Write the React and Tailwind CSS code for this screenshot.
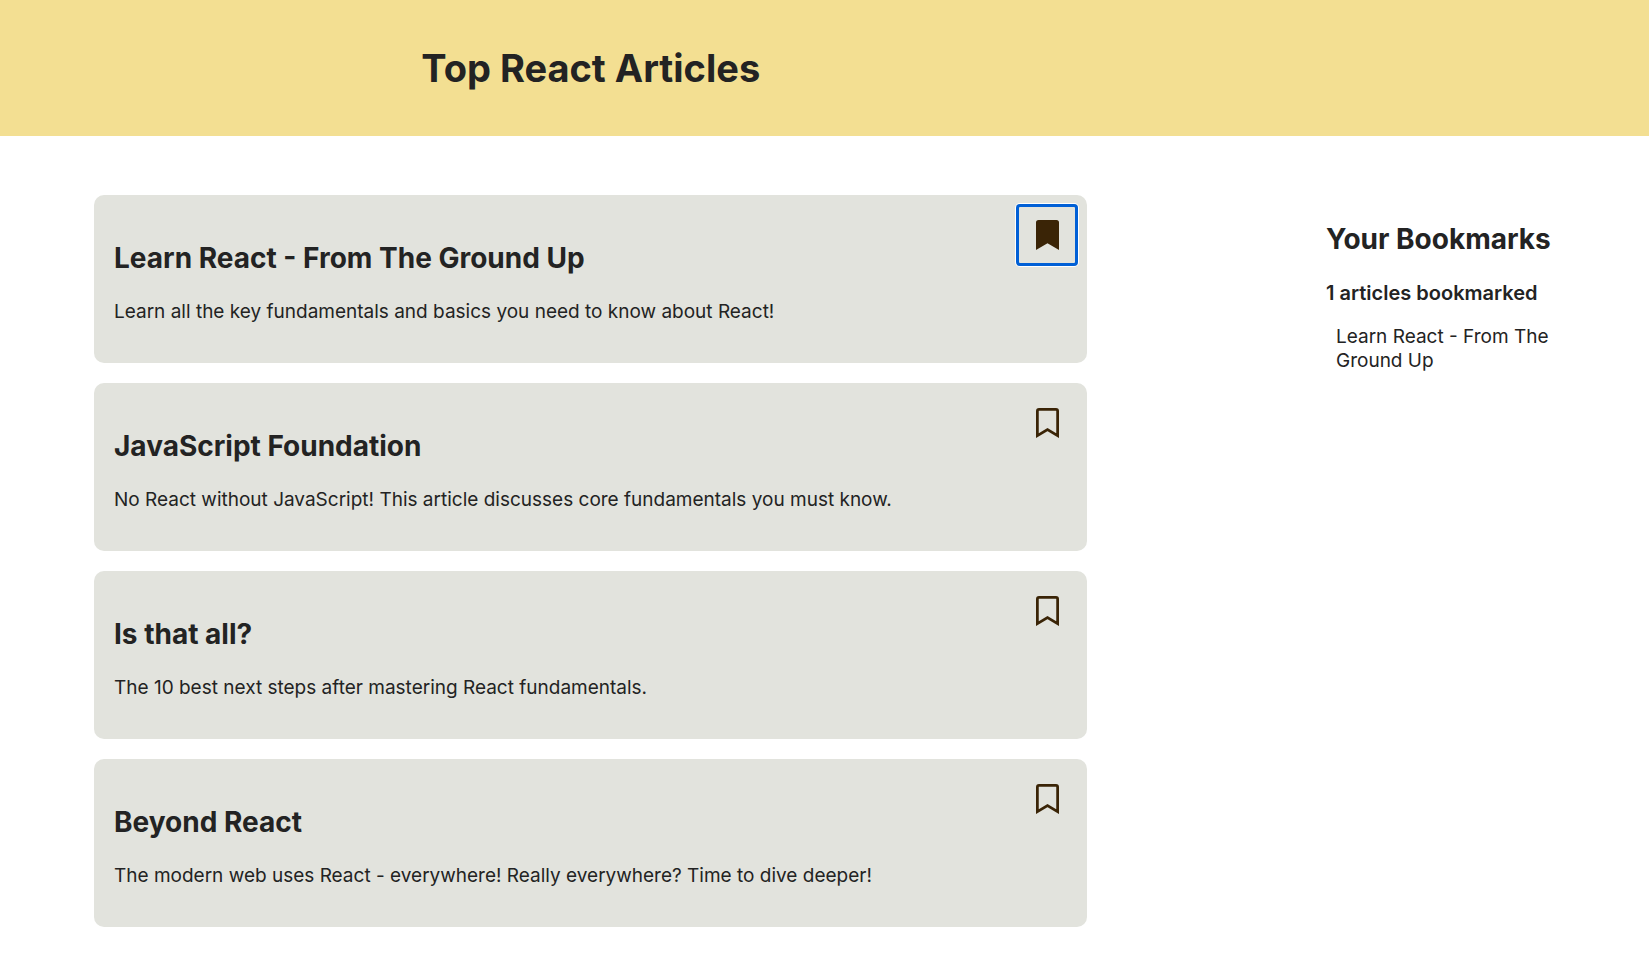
import { useState } from "react";

const ARTICLES = [
  {
    id: "learn-react",
    title: "Learn React - From The Ground Up",
    text: "Learn all the key fundamentals and basics you need to know about React!",
  },
  {
    id: "javascript-foundation",
    title: "JavaScript Foundation",
    text: "No React without JavaScript! This article discusses core fundamentals you must know.",
  },
  {
    id: "is-that-all",
    title: "Is that all?",
    text: "The 10 best next steps after mastering React fundamentals.",
  },
  {
    id: "beyond-react",
    title: "Beyond React",
    text: "The modern web uses React - everywhere! Really everywhere? Time to dive deeper!",
  },
];

function BookmarkIcon({ filled }) {
  return (
    <svg viewBox="0 0 46 60" className="h-[30px] w-[23px]" aria-hidden="true">
      {filled ? (
        <path d="M5 0H41Q46 0 46 5V60L23 46.5L0 60V5Q0 0 5 0Z" fill="#3a2406" />
      ) : (
        <path
          d="M6 2.75H40Q43.25 2.75 43.25 6V55.2L23 43L2.75 55.2V6Q2.75 2.75 6 2.75Z"
          fill="none"
          stroke="#3a2406"
          strokeWidth="5.5"
        />
      )}
    </svg>
  );
}

function Article({ article, bookmarked, focused, onToggle }) {
  return (
    <li className="relative rounded-[10px] bg-[#e2e3dd] px-5 pt-[45px] pb-[39px]">
      <h2 className="text-[28px] leading-9 font-bold">{article.title}</h2>
      <p className="mt-6 text-[19px] leading-6">{article.text}</p>
      <button
        type="button"
        aria-label="Bookmark article"
        aria-pressed={bookmarked}
        onClick={onToggle}
        className={
          "absolute top-[9px] right-[9px] grid size-[62px] place-items-center rounded " +
          (focused ? "border-3 border-[#0060d6] ring-1 ring-white" : "")
        }
      >
        <BookmarkIcon filled={bookmarked} />
      </button>
    </li>
  );
}

export default function App() {
  const [saved, setSaved] = useState(["learn-react"]);
  const [focused, setFocused] = useState("learn-react");

  function toggle(id) {
    setFocused(id);
    setSaved((prev) =>
      prev.includes(id) ? prev.filter((x) => x !== id) : [...prev, id]
    );
  }

  return (
    <div className="font-['Inter',sans-serif] text-[#232323]">
      <header className="bg-[#f3df92] px-[94px] py-11">
        <h1 className="w-[68%] text-center text-[38px] leading-12 font-bold">
          Top React Articles
        </h1>
      </header>
      <div className="flex justify-between px-[94px] pt-[59px] pb-9">
        <main className="w-[68%]">
          <ul className="flex flex-col gap-5">
            {ARTICLES.map((a) => (
              <Article
                key={a.id}
                article={a}
                bookmarked={saved.includes(a.id)}
                focused={focused === a.id}
                onToggle={() => toggle(a.id)}
              />
            ))}
          </ul>
        </main>
        <aside className="w-[229px] pt-[26px]">
          <h2 className="text-[28px] leading-9 font-bold whitespace-nowrap">
            Your Bookmarks
          </h2>
          <p className="mt-6 text-[20px] leading-6 font-semibold">
            {saved.length} articles bookmarked
          </p>
          <ul className="mt-5 pl-[10px] text-[19px] leading-6">
            {ARTICLES.filter((a) => saved.includes(a.id)).map((a) => (
              <li key={a.id}>{a.title}</li>
            ))}
          </ul>
        </aside>
      </div>
    </div>
  );
}
